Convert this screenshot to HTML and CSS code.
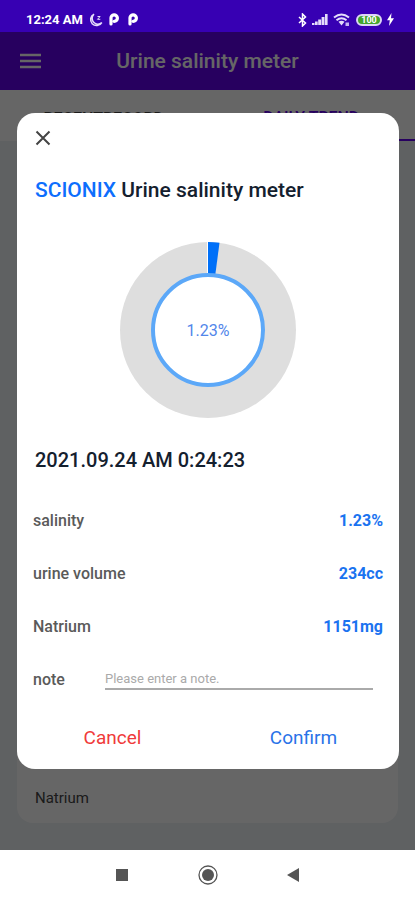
FILE: index.html
```html
<!DOCTYPE html>
<html lang="en">
<head>
    <meta charset="UTF-8">
    <meta name="viewport" content="width=device-width, initial-scale=1.0">
    <title>Urine salinity meter</title>
    <link rel="stylesheet" href="styles.css">
</head>
<body>

<div class="status">
    <span class="clock">12:24 AM</span>
    <svg class="moon" width="14" height="14" viewBox="0 0 14 14"><path d="M5 1.2A6 6 0 1 0 12.8 9.6A5.6 5.6 0 0 1 5 1.2Z" fill="none" stroke="#e4dcfa" stroke-width="1.5"/><path d="M8.5 3.5h2.6L8.5 6.3h2.8" fill="none" stroke="#e4dcfa"/></svg>
    <svg class="papp" width="10" height="13" viewBox="0 0 10 13"><path d="M2 11V5.5A3.2 3.2 0 1 1 5.2 8.3" fill="none" stroke="#fff" stroke-width="3.2" stroke-linecap="round"/></svg>
    <svg class="papp" width="10" height="13" viewBox="0 0 10 13"><path d="M2 11V5.5A3.2 3.2 0 1 1 5.2 8.3" fill="none" stroke="#fff" stroke-width="3.2" stroke-linecap="round"/></svg>
    <div class="system">
        <svg width="9" height="14" viewBox="0 0 9 14"><path d="M1 4l6.5 6L4.500 13V1l3 3L1 10" fill="none" stroke="#fff" stroke-width="1.5"/></svg>
        <svg width="16" height="13" viewBox="0 0 16 13" fill="#e4dcfa"><path d="M0 10h2.5v2H0zM3 8.500h2.700V12H3zM6.200 6.500h2.900V12H6.200zM9.600 4h2.900v8H9.600zM13 1h2.600v11H13z"/></svg>
        <svg width="18" height="14" viewBox="0 0 18 14"><g fill="none" stroke="#e4dcfa" stroke-width="2"><path d="M1 4.500Q8.500-1.500 16 4.500M3.500 7.300Q8.500 3.200 13.500 7.300"/></g><path d="M5.500 8.800Q8.500 6.500 11.500 8.800L8.500 12.500z" fill="#e4dcfa"/><path d="M12.500 9.500h3.500v3.500h-3.500z" fill="#c5b5f2"/></svg>
        <span class="battery">100</span>
        <svg width="7" height="13" viewBox="0 0 7 13"><path d="M4.500 0L0 7.200h2.800L2 13l5-7.800H4z" fill="#fff"/></svg>
    </div>
</div>

<div class="app">
    <header class="bar">
        <button class="menu" aria-label="Menu"><svg width="21" height="16" viewBox="0 0 21 16"><path d="M0 2h21M0 8h21M0 14h21" stroke="currentColor" stroke-width="2.5"/></svg></button>
        <h1>Urine salinity meter</h1>
    </header>
    <nav class="tabs">
        <a href="#recent">RECENTRECORD</a>
        <a href="#trend" class="active">DAILY TREND</a>
    </nav>
    <main class="content">
        <div class="card">Natrium</div>
    </main>

    <div class="overlay">
        <form class="dialog" role="dialog" aria-labelledby="dialogTitle">
            <button type="button" class="close" aria-label="Close"><svg width="16" height="16" viewBox="0 0 16 16"><path d="M1.500 1.500l13 13M14.500 1.500l-13 13" stroke="#444" stroke-width="2"/></svg></button>
            <h2 id="dialogTitle"><span>SCIONIX</span> Urine salinity meter</h2>
            <div class="chart">
                <svg width="176" height="176" viewBox="0 0 176 176">
                    <circle cx="88" cy="88" r="88" fill="#dedede"/>
                    <path d="M88 88V0A88 88 0 0 1 99.500 0.800Z" fill="#0070f8"/>
                    <path d="M87.500 0V34" stroke="#fff"/>
                    <circle cx="88" cy="88" r="55" fill="#fff" stroke="#5ca8f8" stroke-width="4"/>
                </svg>
                <span class="percent">1.23%</span>
            </div>
            <h3>2021.09.24 AM 0:24:23</h3>
            <dl class="values">
                <div><dt>salinity</dt><dd>1.23%</dd></div>
                <div><dt>urine volume</dt><dd>234cc</dd></div>
                <div><dt>Natrium</dt><dd>1151mg</dd></div>
            </dl>
            <div class="note">
                <label for="note">note</label>
                <input type="text" id="note" placeholder="Please enter a note.">
            </div>
            <div class="actions">
                <button type="button" class="cancel">Cancel</button>
                <button type="button" class="confirm">Confirm</button>
            </div>
        </form>
    </div>
</div>

<footer class="system-nav">
    <button aria-label="Recent apps"><svg width="20" height="20" viewBox="0 0 20 20"><path d="M4 4h12v12H4z" fill="#555"/></svg></button>
    <button aria-label="Home"><svg width="20" height="20" viewBox="0 0 20 20"><circle cx="10" cy="10" r="9" fill="none" stroke="#555" stroke-width="1.3"/><circle cx="10" cy="10" r="6" fill="#555"/></svg></button>
    <button aria-label="Back"><svg width="20" height="20" viewBox="0 0 20 20"><path d="M15 3v14L3 10z" fill="#555"/></svg></button>
</footer>

</body>
</html>
```
FILE: styles.css
```css
* {
    box-sizing: border-box;
}
body {
    margin: 0;
    min-height: 100vh;
    display: flex;
    flex-direction: column;
    font-family: Roboto, 'Liberation Sans', sans-serif;
    background: white;
}
h1, h2, h3, dl, dd {
    margin: 0;
}
button {
    background: none;
    border: none;
    padding: 0;
    font-family: inherit;
    cursor: pointer;
}
svg {
    display: block;
}
.status {
    height: 32px;
    padding: 7px 21px 0 26px;
    display: flex;
    align-items: center;
    background: #3700b3;
    color: white;
}
.clock {
    font-size: 13px;
    font-weight: 700;
}
.moon {
    margin-left: 6px;
}
.papp {
    margin-left: 6px;
}
.papp + .papp {
    margin-left: 9px;
}
.system {
    margin-left: auto;
    display: flex;
    align-items: center;
    gap: 5px;
}
.battery {
    width: 26px;
    height: 12px;
    border: 2px solid #dcd6f5;
    border-radius: 6px;
    background: #43a52c;
    font-size: 9px;
    font-weight: 700;
    line-height: 8px;
    text-align: center;
}
.app {
    flex: 1;
    display: flex;
    flex-direction: column;
    position: relative;
    background: #eef2f6;
}
.bar {
    height: 58px;
    display: grid;
    grid-template-columns: 80px 1fr 80px;
    align-items: center;
    background: #6200ee;
    color: white;
}
.menu {
    margin-left: 20px;
    color: inherit;
    justify-self: start;
}
.bar h1 {
    font-size: 21px;
    font-weight: 500;
    text-align: center;
    white-space: nowrap;
}
.tabs {
    height: 51px;
    display: flex;
    background: white;
}
.tabs a {
    flex: 1;
    display: flex;
    align-items: center;
    justify-content: center;
    padding-top: 6px;
    font-size: 16px;
    font-weight: 500;
    color: #444;
    text-decoration: none;
}
.tabs .active {
    color: #6200ee;
    border-bottom: 2px solid #6200ee;
}
.content {
    flex: 1;
    display: flex;
    flex-direction: column;
    justify-content: flex-end;
    padding: 18px 17px 27px;
}
.card {
    height: 110px;
    padding: 0 18px 16px;
    display: flex;
    align-items: flex-end;
    border-radius: 16px;
    background: white;
    font-size: 15px;
    color: #444;
}
.overlay {
    position: absolute;
    inset: 0;
    padding: 0 16px 0 17px;
    display: flex;
    align-items: center;
    background: rgba(0, 0, 0, 0.6);
}
.dialog {
    flex: 1;
    padding: 17px 16px 19px;
    border-radius: 18px;
    background: white;
}
.close {
    display: block;
    margin-left: 2px;
}
.dialog h2 {
    margin: 31px 0 0 2px;
    font-size: 21px;
    font-weight: 500;
    line-height: 26px;
    color: #14202e;
}
.dialog h2 span {
    color: #0d6efd;
}
.chart {
    margin: 39px 0 32px;
    display: grid;
    place-items: center;
}
.chart > * {
    grid-area: 1 / 1;
}
.percent {
    font-size: 16px;
    color: #5286ea;
}
.dialog h3 {
    margin-left: 2px;
    font-size: 20px;
    font-weight: 500;
    line-height: 20px;
    color: #14202e;
}
.values {
    padding-top: 24px;
}
.values div, .note {
    height: 53px;
    display: flex;
    align-items: center;
    justify-content: space-between;
}
.values dt, .note label {
    font-size: 16px;
    font-weight: 500;
    color: #5a5a5a;
}
.values dd {
    font-size: 16px;
    font-weight: 700;
    color: #1a73f0;
}
.note label {
    width: 72px;
}
.note input {
    flex: 1;
    min-width: 0;
    height: 21px;
    margin-right: 10px;
    padding: 0;
    border: none;
    border-bottom: 2px solid #aaa;
    background: none;
    font-family: inherit;
    font-size: 13px;
}
.note input::placeholder {
    color: #aaa;
}
.actions {
    display: grid;
    grid-template-columns: 1fr 1fr;
    margin: 0 -16px;
    padding-top: 20px;
}
.actions button {
    font-size: 19px;
    line-height: 24px;
}
.cancel {
    color: #f03a3a;
}
.confirm {
    color: #2a73e8;
}
.system-nav {
    height: 50px;
    display: flex;
    align-items: center;
    justify-content: center;
    gap: 66px;
    background: white;
}
```
